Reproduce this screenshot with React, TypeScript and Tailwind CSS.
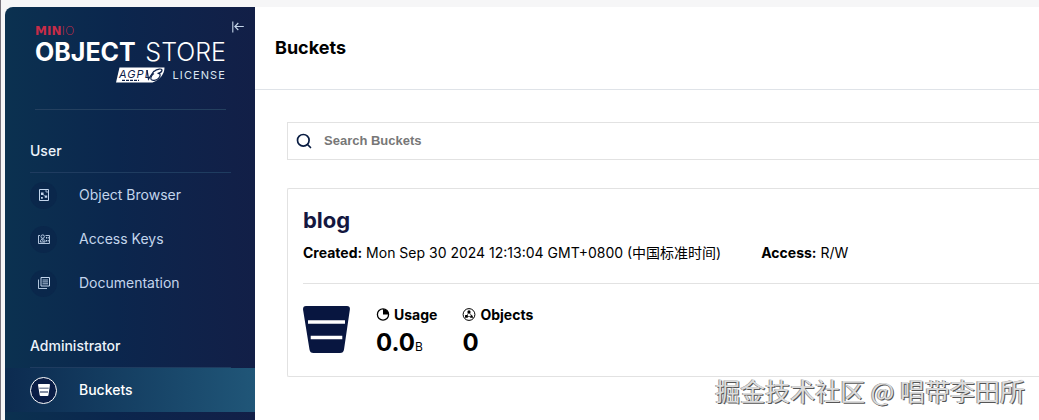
import type { ReactNode } from "react";

interface MenuItem {
  label: string;
  icon: ReactNode;
  active?: boolean;
}

const BrowserIcon = () => (
  <svg viewBox="0 0 12 12" className="size-3" fill="none" stroke="currentColor">
    <path d="M1.500 .5h9v11h-9z" />
    <path d="M8 1v2h2" strokeWidth=".8" />
    <path d="M3 3.500h2.500v2.500H3zM6.800 6.500h2.400v2.200H6.800zM3 8h1.800v1.800H3z" fill="currentColor" stroke="none" />
    <path d="M5 5.500l2.500 2" strokeWidth=".6" />
  </svg>
);

const KeysIcon = () => (
  <svg viewBox="0 0 12 12" className="size-3" fill="none" stroke="currentColor">
    <path d="M2 2.500H.5v8h11v-8H7.500" strokeWidth=".9" />
    <circle cx="4.700" cy="3.600" r="1.700" strokeWidth=".9" />
    <path d="M2.300 9c0-4 4.800-4 4.800 0zM3.500 6.200l2.400 2.300" strokeWidth=".9" />
    <path d="M8 4h1v1.500H8zM9.700 4h1v1.500h-1zM8 7h1v1.500H8zM9.700 7h1v1.500h-1z" fill="currentColor" stroke="none" />
  </svg>
);

const DocsIcon = () => (
  <svg viewBox="0 0 12 12" className="size-3" fill="none" stroke="currentColor">
    <path d="M3 .5h8.500v8.500H3z" />
    <path d="M.5 2.500v9h8.500M4.500 3h5.500M4.500 4.900h5.500M4.500 6.800h5.500" strokeWidth=".9" />
  </svg>
);

const BucketIcon = ({ className }: { className: string }) => (
  <svg viewBox="0 0 47 47" className={className} fill="currentColor">
    <path
      fillRule="evenodd"
      d="M3 0H44Q47.500 0 46.800 4L41 43.500Q40.500 47 37 47H10.500Q7 47 6.500 43.500L.1 4Q-.4 0 3 0ZM5 14.300V17.800H42V14.300ZM7.700 29.700V33.200H39.300V29.700Z"
    />
  </svg>
);

const SearchIcon = () => (
  <svg viewBox="0 0 16 16" className="size-4 shrink-0" fill="none" stroke="#081c42" strokeWidth="1.700">
    <circle cx="7.300" cy="7.300" r="5.800" />
    <path d="M11.500 11.500l3 3" strokeLinecap="round" />
  </svg>
);

const UsageIcon = () => (
  <svg viewBox="0 0 14 14" className="size-3.5">
    <circle cx="7" cy="6.500" r="5.600" fill="none" stroke="#000" strokeWidth="1.300" />
    <path d="M7 6.500V.9A5.600 5.600 0 0 1 12.600 6.500z" fill="#000" />
  </svg>
);

const ObjectsIcon = () => (
  <svg viewBox="0 0 14 14" className="size-3.5">
    <circle cx="7" cy="6.500" r="5.900" fill="none" stroke="#000" strokeWidth="1" />
    <circle cx="7" cy="3.900" r="1.600" />
    <rect x="3" y="7" width="2.800" height="2.800" rx=".6" />
    <path d="M9.700 6.500l1.800 3.300H7.900z" />
    <path d="M7 4L4.400 8.500h5.200z" fill="none" stroke="#000" strokeWidth=".6" />
  </svg>
);

const CollapseIcon = () => (
  <svg viewBox="0 0 12 12" className="size-3" fill="none" stroke="currentColor" strokeWidth="1.100">
    <path d="M.8.5v11M11.800 5.500H3M6.300 2L2.800 5.500l3.500 3.500" />
  </svg>
);

// slanted AGPL v3 badge
const AgplBadge = () => (
  <svg viewBox="0 0 49 16" className="h-4 w-[49px]">
    <path d="M3.500 .5h45c0 6-4 12-12 15H0z" fill="#fff" />
    <text x="3" y="11" fontSize="11" fontStyle="italic" fontFamily="Inter, sans-serif" fill="#0c2049">
      AGPL
    </text>
    <path d="M6 13.300h17" stroke="#0c2049" strokeWidth="1.200" strokeDasharray="3 1" />
    <path d="M31 3l1.500 9L38 4" fill="none" stroke="#0c2049" strokeWidth="1.300" />
    <path d="M38 4.500c3-3 8.500-3.200 8-1-.4 1.600-2.500 2.600-4.500 3 3.500-.3 3.300 2.500 1 4.800-2.200 2.200-6.500 3-7.500 1-.8-1.800 1-4.500 3-5.800" fill="none" stroke="#0c2049" strokeWidth="1.200" />
  </svg>
);

const groups: { title: string; items: MenuItem[] }[] = [
  {
    title: "User",
    items: [
      { label: "Object Browser", icon: <BrowserIcon /> },
      { label: "Access Keys", icon: <KeysIcon /> },
      { label: "Documentation", icon: <DocsIcon /> },
    ],
  },
  {
    title: "Administrator",
    items: [{ label: "Buckets", icon: <BucketIcon className="size-3" />, active: true }],
  },
];

function Sidebar() {
  return (
    <aside className="w-[250px] shrink-0 rounded-tl-lg bg-linear-to-r from-[#0b3150] via-[#0b264d] via-45% to-[#121f47]">
      <div className="relative ml-[30px] mr-[29px] h-[103px] border-b border-[#24405f] pt-[18px]">
        <div className="font-['DejaVu_Sans',sans-serif] text-xs leading-3 text-[#c72c48]">
          <span className="font-bold">MIN</span>
          <span className="font-extralight">IO</span>
        </div>
        <div className="flex items-center justify-between whitespace-nowrap text-[25px] leading-[30px] text-white">
          <span className="font-bold">OBJECT</span>
          <span className="font-light">STORE</span>
        </div>
        <div className="flex items-center justify-end gap-2 text-[11px] leading-4 tracking-widest text-[#dbe6f2]">
          <AgplBadge />
          <span>LICENSE</span>
        </div>
        <button aria-label="Collapse menu" className="absolute -right-[18px] top-3.5 text-[#c4d4e8]">
          <CollapseIcon />
        </button>
      </div>

      <nav className="pt-[27px]">
        {groups.map((group) => (
          <section key={group.title} className="mb-[27px]">
            <h2 className="ml-[25px] mr-6 h-9 border-b border-[#1f3c60] pt-1 text-sm font-medium leading-5 text-[#edf3fa]">
              {group.title}
            </h2>
            {group.items.map((item) => (
              <a
                key={item.label}
                href="#"
                className={`flex h-11 items-center gap-[22px] pl-[25px] text-sm ${
                  item.active
                    ? "bg-linear-to-r from-[#0c2b50] to-[#205678] font-medium text-white"
                    : "text-[#c3d5ec]"
                }`}
              >
                <span
                  className={`flex size-[27px] items-center justify-center rounded-full ${
                    item.active ? "border border-white bg-[#0a1d46]" : "bg-[#0a274b]"
                  }`}
                >
                  {item.icon}
                </span>
                {item.label}
              </a>
            ))}
          </section>
        ))}
      </nav>
    </aside>
  );
}

function BucketCard() {
  return (
    <article className="mt-7 rounded-l-xs border border-r-0 border-[#e2e2e2] pb-[18px] pl-[15px] pt-[17px]">
      <h2 className="text-[22px] font-bold leading-7 text-[#14173f]">blog</h2>
      <div className="mt-[7px] flex gap-10 text-sm leading-6">
        <p>
          <b>Created:</b> Mon Sep 30 2024 12:13:04 GMT+0800 (中国标准时间)
        </p>
        <p>
          <b>Access:</b> R/W
        </p>
      </div>
      <div className="mt-[18px] flex border-t border-[#e2e2e2] pt-[22px]">
        <BucketIcon className="size-[47px] text-[#081640]" />
        <dl className="ml-[26px] flex gap-[25px]">
          <div>
            <dt className="flex items-center gap-1 text-sm font-bold leading-[18px]">
              <UsageIcon />
              Usage
            </dt>
            <dd className="mt-1 text-2xl font-bold leading-[30px]">
              0.0<span className="text-xs font-normal">B</span>
            </dd>
          </div>
          <div>
            <dt className="flex items-center gap-1 text-sm font-bold leading-[18px]">
              <ObjectsIcon />
              Objects
            </dt>
            <dd className="mt-1 text-2xl font-bold leading-[30px]">0</dd>
          </div>
        </dl>
      </div>
    </article>
  );
}

export default function App() {
  return (
    <div className="relative flex h-screen overflow-hidden border-l border-[#77737c] bg-[#f6f6f7] pl-1 pt-[7px] font-['Inter','Noto_Sans_CJK_SC',sans-serif] text-black">
      <Sidebar />
      <main className="min-w-0 flex-1 bg-white">
        <header className="flex h-[83px] items-center border-b border-[#dfe3e8] pl-5">
          <h1 className="text-lg font-bold">Buckets</h1>
        </header>
        <div className="pl-8 pt-8">
          <label className="flex h-[38px] items-center gap-3 border border-r-0 border-[#e2e2e2] pl-2">
            <SearchIcon />
            <input
              type="text"
              aria-label="Search Buckets"
              placeholder="Search Buckets"
              className="flex-1 font-['Liberation_Sans',sans-serif] text-[13px] font-bold outline-none placeholder:text-[#777]"
            />
          </label>
          <BucketCard />
        </div>
      </main>
      <div className="pointer-events-none absolute bottom-3 right-3.5 whitespace-nowrap font-['Noto_Sans_CJK_SC',sans-serif] text-[25px] leading-9 text-[#dcdcdc] [text-shadow:1px_1px_0_#555,-1px_0_0_#999]">
        掘金技术社区 @ 唱带李田所
      </div>
    </div>
  );
}
